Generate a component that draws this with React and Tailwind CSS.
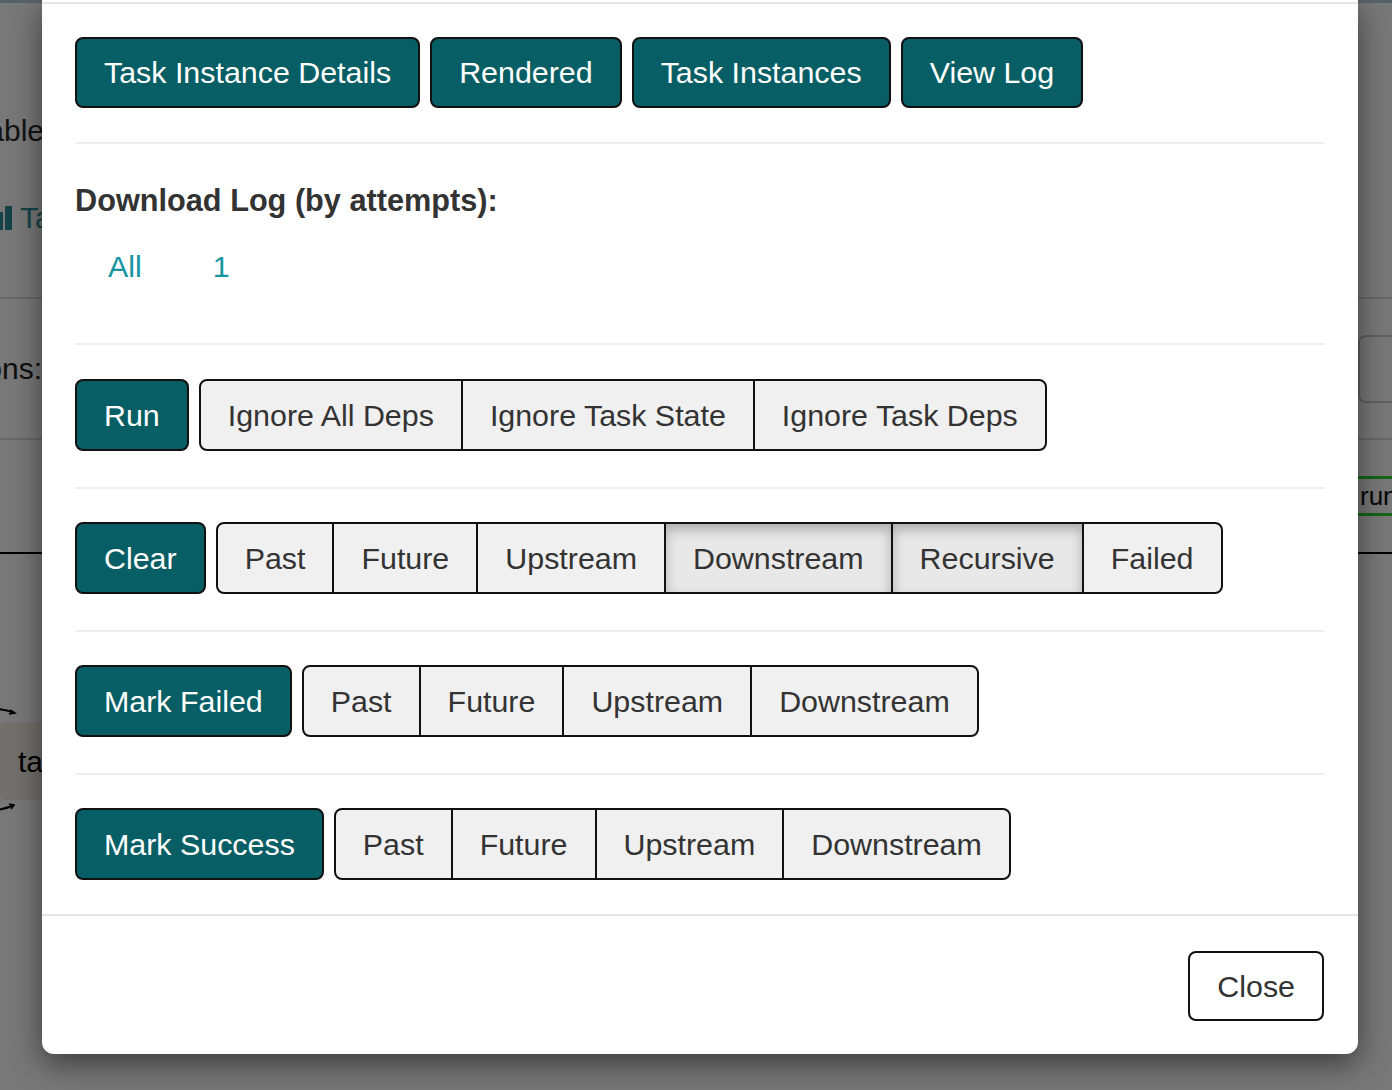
import React from "react";

const font = "font-['Liberation_Sans','Helvetica_Neue',Arial,sans-serif]";

const PrimaryButton = ({ label, height = "h-[72px]" }) => (
  <button
    className={`${height} px-[27px] flex items-center justify-center bg-[#075e64] text-white text-[30.4px] border-2 border-[#111] rounded-[8px] leading-none whitespace-nowrap`}
  >
    {label}
  </button>
);

const ButtonGroup = ({ items }) => (
  <div className="h-[72px] flex border-2 border-[#111] rounded-[8px] overflow-hidden bg-[#f0f0f0]">
    {items.map((item, i) => (
      <button
        key={item.label}
        className={`h-full px-[27px] flex items-center text-[30.4px] text-[#333] leading-none whitespace-nowrap ${
          i > 0 ? "border-l-2 border-[#111]" : ""
        } ${
          item.active
            ? "bg-[#e8e8e8] shadow-[inset_0_6px_12px_rgba(0,0,0,0.25)]"
            : ""
        }`}
      >
        {item.label}
      </button>
    ))}
  </div>
);

const Divider = ({ className }) => (
  <div className={`h-[2px] bg-[#eee] ${className}`} />
);

const actionRows = [
  {
    label: "Run",
    items: [
      { label: "Ignore All Deps" },
      { label: "Ignore Task State" },
      { label: "Ignore Task Deps" },
    ],
  },
  {
    label: "Clear",
    items: [
      { label: "Past" },
      { label: "Future" },
      { label: "Upstream" },
      { label: "Downstream", active: true },
      { label: "Recursive", active: true },
      { label: "Failed" },
    ],
  },
  {
    label: "Mark Failed",
    items: [
      { label: "Past" },
      { label: "Future" },
      { label: "Upstream" },
      { label: "Downstream" },
    ],
  },
  {
    label: "Mark Success",
    items: [
      { label: "Past" },
      { label: "Future" },
      { label: "Upstream" },
      { label: "Downstream" },
    ],
  },
];

// page behind the modal, mostly hidden
const BackgroundPage = () => (
  <div className="flex flex-col w-full">
    <div className="h-[3px] bg-[#b8d3d8]" />
    <div className="h-[97px]" />
    <div className="h-[60px] w-[44px] flex items-center justify-end text-[30px] text-[#2a2a2a] whitespace-nowrap">
      Enable
    </div>
    <div className="h-[30px]" />
    <div className="h-[55px] flex items-center gap-[8px] text-[30px] text-[#2f8f9a] -ml-[2px]">
      <svg width="14" height="24" viewBox="0 0 14 24" className="fill-[#2f8f9a]">
        <rect x="0" y="6" width="5" height="18" />
        <rect x="7" y="0" width="7" height="24" />
      </svg>
      Task Instances
    </div>
    <div className="h-[52px]" />
    <div className="h-[2px] bg-[#ddd]" />
    <div className="h-[139px] flex items-center">
      <span className="w-[42px] flex justify-end text-[30px] text-[#222] whitespace-nowrap">
        Actions:
      </span>
      <div className="ml-auto -mr-[20px] w-[54px] h-[68px] border-2 border-[#ccc] rounded-[8px] bg-white" />
    </div>
    <div className="h-[2px] bg-[#ddd]" />
    <div className="h-[112px] flex items-center">
      <div className="ml-auto -mr-[80px] w-[114px] h-[40px] border-y-[3px] border-[#2fd62f] flex items-center text-[26px] text-[#111] pl-[2px]">
        running
      </div>
    </div>
    <div className="h-[2px] bg-[#000]" />
    <div className="h-[152px]" />
    <svg width="40" height="10" viewBox="0 0 40 10" className="-ml-[2px]">
      <path d="M0 3 Q10 4 16 7" stroke="#000" strokeWidth="2" fill="none" />
      <path d="M12 4 L17 7 L11 8" stroke="#000" strokeWidth="1.5" fill="none" />
    </svg>
    <div className="h-[6px]" />
    <div className="h-[78px] w-[300px] bg-[#f2efe8] flex items-center pl-[18px] text-[30px] text-[#000] rounded-[4px]">
      task
    </div>
    <svg width="40" height="10" viewBox="0 0 40 10" className="-ml-[2px] mt-[2px]">
      <path d="M0 8 Q10 6 16 3" stroke="#000" strokeWidth="2" fill="none" />
      <path d="M11 2 L16 3 L13 7" stroke="#000" strokeWidth="1.5" fill="none" />
    </svg>
  </div>
);

export default function App() {
  return (
    <div className={`relative w-full h-[1090px] overflow-hidden bg-white ${font}`}>
      <BackgroundPage />
      <div className="absolute inset-0 bg-black/[0.53]" />

      <div className="absolute left-[42px] top-0 w-[1316px] bg-white rounded-b-[12px] shadow-[0_10px_30px_rgba(0,0,0,0.5)]">
        <div className="h-[2px]" />
        <div className="border-t-2 border-[#e5e5e5] px-[33px] pt-[33px] pb-[34px]">
          <div className="flex gap-[10px]">
            <PrimaryButton label="Task Instance Details" height="h-[71px]" />
            <PrimaryButton label="Rendered" height="h-[71px]" />
            <PrimaryButton label="Task Instances" height="h-[71px]" />
            <PrimaryButton label="View Log" height="h-[71px]" />
          </div>

          <Divider className="mt-[34px]" />

          <div className="mt-[37px] h-[40px] flex items-center text-[30.7px] font-bold text-[#333] whitespace-nowrap">
            Download Log (by attempts):
          </div>
          <div className="mt-[26px] h-[40px] flex items-center pl-[33px] text-[30.4px] text-[#1795a3]">
            <a>All</a>
            <a className="ml-[71px]">1</a>
          </div>

          <Divider className="mt-[56px]" />

          {actionRows.map((row, i) => (
            <div key={row.label}>
              {i > 0 && <Divider className="mt-[36px]" />}
              <div className={`flex gap-[10px] ${i > 0 ? "mt-[33px]" : "mt-[34px]"}`}>
                <PrimaryButton label={row.label} />
                <ButtonGroup items={row.items} />
              </div>
            </div>
          ))}
        </div>

        <div className="border-t-2 border-[#e5e5e5] flex justify-end pt-[35px] pb-[33px] pr-[34px]">
          <button className="h-[70px] px-[27px] flex items-center bg-white text-[#333] text-[30.4px] border-2 border-[#111] rounded-[8px] leading-none">
            Close
          </button>
        </div>
      </div>
    </div>
  );
}
